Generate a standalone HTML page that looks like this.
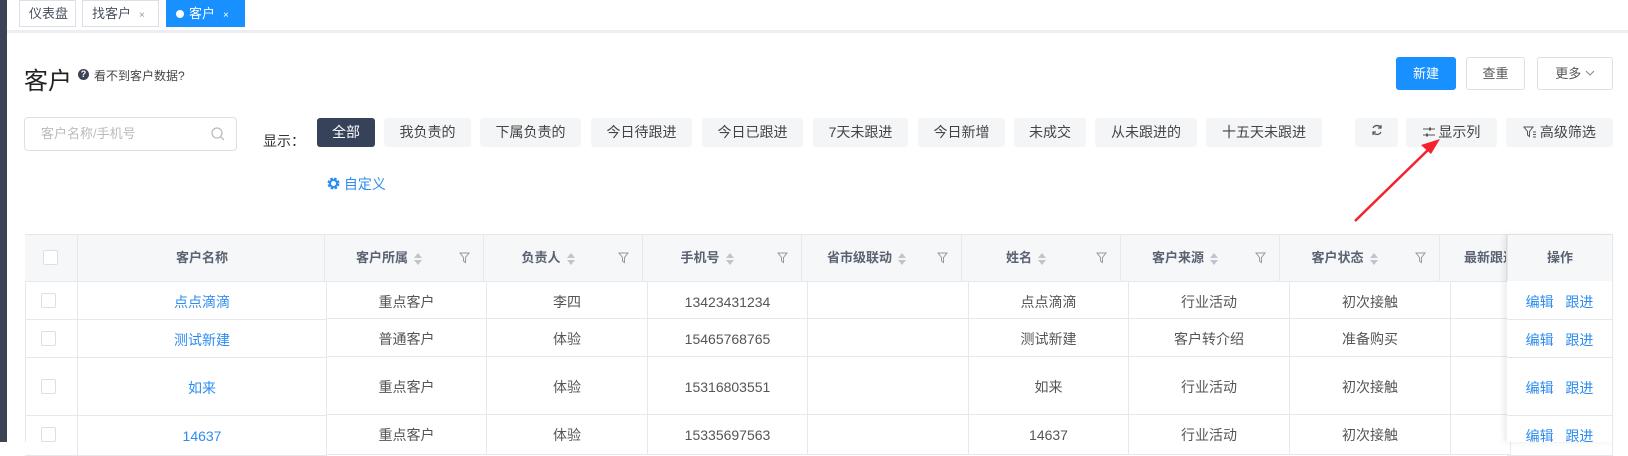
<!DOCTYPE html>
<html><head><meta charset="utf-8"><style>
*{box-sizing:border-box;margin:0;padding:0}
body{width:1628px;height:442px;overflow:hidden;background:#fff;font-family:"Liberation Sans","Noto Sans CJK SC",sans-serif;position:relative;color:#333}
.a{position:absolute}
.tab{position:absolute;top:0;height:27px;border:1px solid #dcdfe6;font-size:13px;line-height:25px;color:#495060;background:#fff;padding-left:9px}
.tab .x{font-size:10px;color:#999;margin-left:8px}
.fb{position:absolute;top:118px;height:29px;background:#f4f5f7;border-radius:3px;font-size:14px;line-height:29px;text-align:center;color:#444}
.btn{position:absolute;top:57px;height:33px;border:1px solid #dcdfe6;border-radius:3px;font-size:13px;line-height:31px;text-align:center;color:#555;background:#fff}
.th{position:absolute;top:235px;height:46px;border-right:1px solid #e6e8eb;font-size:13px;font-weight:bold;color:#5a6272;line-height:46px;text-align:center;background:#f6f7f9}
.td{position:absolute;border-right:1px solid #e6e8eb;border-bottom:1px solid #e6e8eb;font-size:14px;color:#555;text-align:center;padding-top:2px}
.s{display:inline-block;width:8px;height:14px;vertical-align:middle;margin-left:6px;position:relative}
.s:before{content:"";position:absolute;left:0;top:1px;border:4px solid transparent;border-bottom:5px solid #c0c4cc;border-top:0}
.s:after{content:"";position:absolute;left:0;top:8px;border:4px solid transparent;border-top:5px solid #c0c4cc;border-bottom:0}
.f{position:absolute;right:12px;top:17px}
.cb{position:absolute;width:15px;height:15px;border:1px solid #dcdfe6;border-radius:2px;background:#fff}
.lk{color:#2d8cf0}
</style></head><body>
<div class="a" style="left:0;top:0;width:7px;height:442px;background:#3b4455"></div>
<div class="a" style="left:7px;top:30px;width:1621px;height:3px;background:#eceef2"></div>
<div class="tab" style="left:19px;width:57px">仪表盘</div>
<div class="tab" style="left:82px;width:77px">找客户<span class="x">×</span></div>
<div class="tab" style="left:166px;width:79px;background:#1890ff;border-color:#1890ff;color:#fff"><span style="display:inline-block;width:8px;height:8px;border-radius:50%;background:#fff;margin-right:5px"></span>客户<span class="x" style="color:#fff">×</span></div>

<div class="a" style="left:24px;top:61px;font-size:24px;color:#222">客户</div>
<div class="a" style="left:78px;top:69px;width:11px;height:11px;border-radius:50%;background:#3b4455;color:#fff;font-size:9px;line-height:11px;text-align:center;font-weight:bold">?</div>
<div class="a" style="left:94px;top:67px;font-size:12px;color:#444">看不到客户数据?</div>

<div class="btn" style="left:1396px;width:60px;background:#1890ff;border-color:#1890ff;color:#fff">新建</div>
<div class="btn" style="left:1466px;width:59px">查重</div>
<div class="btn" style="left:1537px;width:76px">更多 <svg width="10" height="6" style="vertical-align:2px"><path d="M1 1l4 4 4-4" fill="none" stroke="#888"/></svg></div>

<div class="a" style="left:24px;top:117px;width:213px;height:34px;border:1px solid #dcdfe6;border-radius:4px;font-size:13px;color:#bbb;line-height:32px;padding-left:16px">客户名称/手机号
<svg style="position:absolute;right:11px;top:9px" width="14" height="14"><circle cx="6" cy="6" r="5" fill="none" stroke="#bbb" stroke-width="1.3"/><path d="M10 10l3 3" stroke="#bbb" stroke-width="1.3"/></svg></div>
<div class="a" style="left:263px;top:131px;font-size:14px;color:#333">显示：</div>
<div class="fb" style="left:317px;width:58px;background:#35425a;color:#fff">全部</div>
<div class="fb" style="left:384px;width:87px">我负责的</div>
<div class="fb" style="left:480px;width:101px">下属负责的</div>
<div class="fb" style="left:591px;width:101px">今日待跟进</div>
<div class="fb" style="left:702px;width:101px">今日已跟进</div>
<div class="fb" style="left:813px;width:95px">7天未跟进</div>
<div class="fb" style="left:918px;width:87px">今日新增</div>
<div class="fb" style="left:1014px;width:72px">未成交</div>
<div class="fb" style="left:1095px;width:102px">从未跟进的</div>
<div class="fb" style="left:1206px;width:116px">十五天未跟进</div>
<div class="fb" style="left:1355px;width:43px"><svg width="12" height="12" style="vertical-align:1px"><path d="M10 4A4.5 4.5 0 0 0 2 4M2 8a4.5 4.5 0 0 0 8 0" fill="none" stroke="#555" stroke-width="1.3"/><path d="M10 1v3H7M2 11V8h3" fill="none" stroke="#555" stroke-width="1.2"/></svg></div>
<div class="fb" style="left:1406px;width:91px"><svg width="12" height="10" style="vertical-align:0"><path d="M0 2h12M0 8h12" stroke="#555"/><rect x="6" y="0.5" width="2" height="3" fill="#555"/><rect x="3" y="6.5" width="2" height="3" fill="#555"/></svg> 显示列</div>
<div class="fb" style="left:1506px;width:107px"><svg width="13" height="12" style="vertical-align:-1px"><path d="M1 1h9l-3.5 4.5v5l-2-1.5v-3.5z" fill="none" stroke="#555"/><path d="M10 6h3M10 8.5h3M10 11h3" stroke="#555"/></svg> 高级筛选</div>
<div class="a" style="left:327px;top:174px;font-size:14px;color:#2d8cf0"><svg width="13" height="13" style="vertical-align:-1px"><circle cx="6.5" cy="6.5" r="4.5" fill="none" stroke="#2d8cf0" stroke-width="3" stroke-dasharray="2.4 1.2"/><circle cx="6.5" cy="6.5" r="3.5" fill="none" stroke="#2d8cf0" stroke-width="2"/></svg> 自定义</div>

<svg class="a" style="left:0;top:0" width="1628" height="442"><path d="M1355 221L1430 148" stroke="#f5222d" stroke-width="2.5"/><path d="M1440 139l-19 6 10 9z" fill="#f5222d"/></svg>

<div class="a" style="left:25px;top:234px;width:1588px;height:1px;background:#e6e8eb"></div>
<div class="a" style="left:25px;top:234px;width:1px;height:208px;background:#e6e8eb"></div>
<div class="th" style="left:25px;width:53px"><span class="cb" style="left:18px;top:15px"></span></div>
<div class="th" style="left:78px;width:247px;text-align:left;padding-left:98px">客户名称</div>
<div class="th" style="left:325px;width:159px;padding-right:30px">客户所属<span class="s"></span><svg class="f" width="12" height="12"><path d="M1 1h9l-3.5 4.5v5l-2-1.5v-3.5z" fill="none" stroke="#999"/></svg></div>
<div class="th" style="left:484px;width:159px;padding-right:30px">负责人<span class="s"></span><svg class="f" width="12" height="12"><path d="M1 1h9l-3.5 4.5v5l-2-1.5v-3.5z" fill="none" stroke="#999"/></svg></div>
<div class="th" style="left:643px;width:159px;padding-right:30px">手机号<span class="s"></span><svg class="f" width="12" height="12"><path d="M1 1h9l-3.5 4.5v5l-2-1.5v-3.5z" fill="none" stroke="#999"/></svg></div>
<div class="th" style="left:802px;width:160px;padding-right:30px">省市级联动<span class="s"></span><svg class="f" width="12" height="12"><path d="M1 1h9l-3.5 4.5v5l-2-1.5v-3.5z" fill="none" stroke="#999"/></svg></div>
<div class="th" style="left:962px;width:159px;padding-right:30px">姓名<span class="s"></span><svg class="f" width="12" height="12"><path d="M1 1h9l-3.5 4.5v5l-2-1.5v-3.5z" fill="none" stroke="#999"/></svg></div>
<div class="th" style="left:1121px;width:159px;padding-right:30px">客户来源<span class="s"></span><svg class="f" width="12" height="12"><path d="M1 1h9l-3.5 4.5v5l-2-1.5v-3.5z" fill="none" stroke="#999"/></svg></div>
<div class="th" style="left:1280px;width:160px;padding-right:30px">客户状态<span class="s"></span><svg class="f" width="12" height="12"><path d="M1 1h9l-3.5 4.5v5l-2-1.5v-3.5z" fill="none" stroke="#999"/></svg></div>
<div class="th" style="left:1440px;width:67px;text-align:left;padding-left:24px;overflow:hidden;white-space:nowrap">最新跟进</div>
<div class="a" style="left:25px;top:281px;width:1588px;height:1px;background:#e6e8eb"></div>

<div class="td" style="left:25px;top:282px;width:53px;height:38px"><span class="cb" style="left:16px;top:11px"></span></div>
<div class="td" style="left:25px;top:320px;width:53px;height:38px"><span class="cb" style="left:16px;top:11px"></span></div>
<div class="td" style="left:25px;top:358px;width:53px;height:58px"><span class="cb" style="left:16px;top:21px"></span></div>
<div class="td" style="left:25px;top:416px;width:53px;height:40px"><span class="cb" style="left:16px;top:11px"></span></div>
<div class="td lk" style="left:78px;top:282px;width:249px;height:38px;line-height:37px">点点滴滴</div>
<div class="td lk" style="left:78px;top:320px;width:249px;height:38px;line-height:37px">测试新建</div>
<div class="td lk" style="left:78px;top:358px;width:249px;height:58px;line-height:57px">如来</div>
<div class="td lk" style="left:78px;top:416px;width:249px;height:40px;line-height:37px">14637</div>

<div class="td" style="left:327px;top:282px;width:160px;height:37px;line-height:36px">重点客户</div>
<div class="td" style="left:327px;top:319px;width:160px;height:38px;line-height:37px">普通客户</div>
<div class="td" style="left:327px;top:357px;width:160px;height:58px;line-height:57px">重点客户</div>
<div class="td" style="left:327px;top:415px;width:160px;height:40px;line-height:37px">重点客户</div>
<div class="td" style="left:487px;top:282px;width:161px;height:37px;line-height:36px">李四</div>
<div class="td" style="left:487px;top:319px;width:161px;height:38px;line-height:37px">体验</div>
<div class="td" style="left:487px;top:357px;width:161px;height:58px;line-height:57px">体验</div>
<div class="td" style="left:487px;top:415px;width:161px;height:40px;line-height:37px">体验</div>
<div class="td" style="left:648px;top:282px;width:160px;height:37px;line-height:36px">13423431234</div>
<div class="td" style="left:648px;top:319px;width:160px;height:38px;line-height:37px">15465768765</div>
<div class="td" style="left:648px;top:357px;width:160px;height:58px;line-height:57px">15316803551</div>
<div class="td" style="left:648px;top:415px;width:160px;height:40px;line-height:37px">15335697563</div>
<div class="td" style="left:808px;top:282px;width:161px;height:37px"></div>
<div class="td" style="left:808px;top:319px;width:161px;height:38px"></div>
<div class="td" style="left:808px;top:357px;width:161px;height:58px"></div>
<div class="td" style="left:808px;top:415px;width:161px;height:40px"></div>
<div class="td" style="left:969px;top:282px;width:160px;height:37px;line-height:36px">点点滴滴</div>
<div class="td" style="left:969px;top:319px;width:160px;height:38px;line-height:37px">测试新建</div>
<div class="td" style="left:969px;top:357px;width:160px;height:58px;line-height:57px">如来</div>
<div class="td" style="left:969px;top:415px;width:160px;height:40px;line-height:37px">14637</div>
<div class="td" style="left:1129px;top:282px;width:161px;height:37px;line-height:36px">行业活动</div>
<div class="td" style="left:1129px;top:319px;width:161px;height:38px;line-height:37px">客户转介绍</div>
<div class="td" style="left:1129px;top:357px;width:161px;height:58px;line-height:57px">行业活动</div>
<div class="td" style="left:1129px;top:415px;width:161px;height:40px;line-height:37px">行业活动</div>
<div class="td" style="left:1290px;top:282px;width:161px;height:37px;line-height:36px">初次接触</div>
<div class="td" style="left:1290px;top:319px;width:161px;height:38px;line-height:37px">准备购买</div>
<div class="td" style="left:1290px;top:357px;width:161px;height:58px;line-height:57px">初次接触</div>
<div class="td" style="left:1290px;top:415px;width:161px;height:40px;line-height:37px">初次接触</div>
<div class="td" style="left:1451px;top:282px;width:60px;height:37px"></div>
<div class="td" style="left:1451px;top:319px;width:60px;height:38px"></div>
<div class="td" style="left:1451px;top:357px;width:60px;height:58px"></div>
<div class="td" style="left:1451px;top:415px;width:60px;height:40px"></div>

<div class="a" style="left:1507px;top:235px;width:106px;height:207px;background:#fff;box-shadow:-3px 0 6px rgba(0,0,0,0.08);border-right:1px solid #e6e8eb"></div>
<div class="th" style="left:1507px;width:106px;border-left:1px solid #e6e8eb">操作</div>
<div class="td lk" style="left:1507px;top:282px;width:106px;height:38px;line-height:37px">编辑&nbsp;&nbsp;&nbsp;跟进</div>
<div class="td lk" style="left:1507px;top:320px;width:106px;height:38px;line-height:37px">编辑&nbsp;&nbsp;&nbsp;跟进</div>
<div class="td lk" style="left:1507px;top:358px;width:106px;height:58px;line-height:57px">编辑&nbsp;&nbsp;&nbsp;跟进</div>
<div class="td lk" style="left:1507px;top:416px;width:106px;height:40px;line-height:37px">编辑&nbsp;&nbsp;&nbsp;跟进</div>
</body></html>
